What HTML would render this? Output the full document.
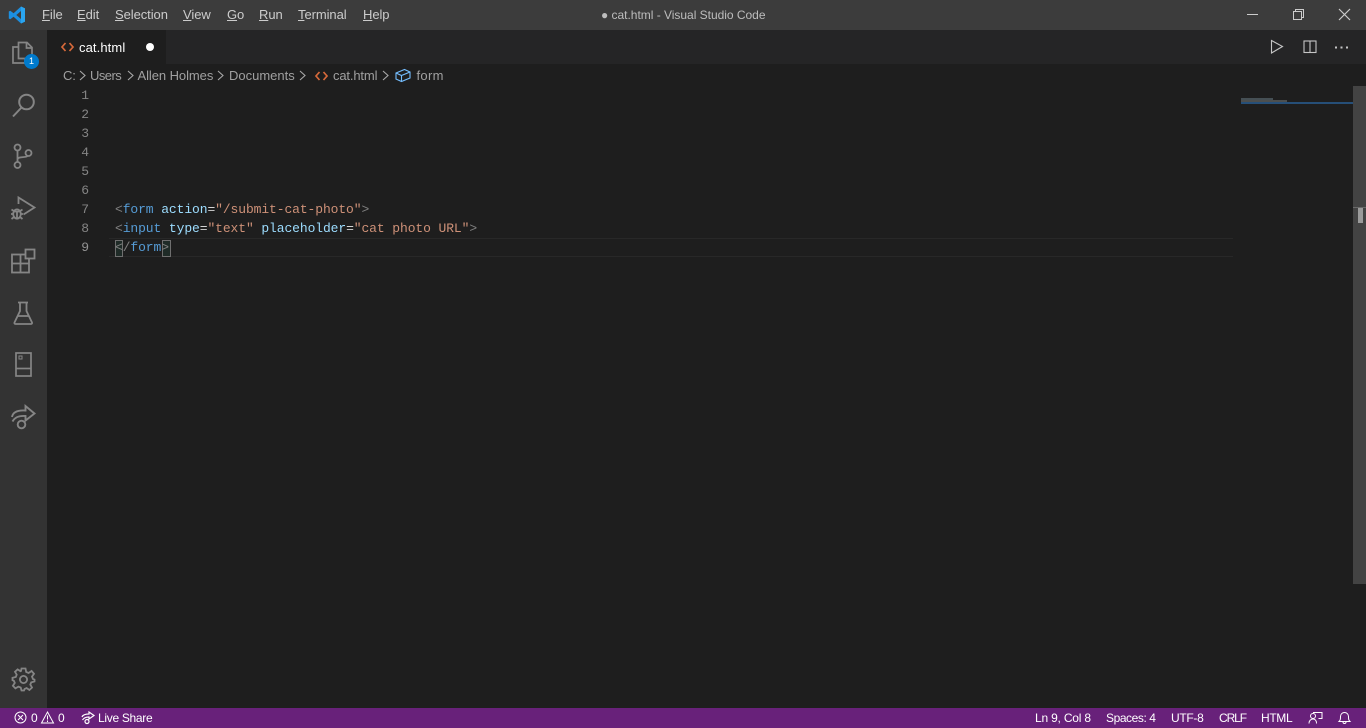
<!DOCTYPE html>
<html lang="en">
<head>
<meta charset="utf-8">
<title>cat.html - Visual Studio Code</title>
<style>
html,body{margin:0;padding:0;width:1366px;height:728px;overflow:hidden;background:#1e1e1e;font-family:"Liberation Sans",sans-serif;}
.a{position:absolute;white-space:pre;}
.m{font-size:13px;color:#cccccc;top:7px;line-height:16px;letter-spacing:-.07px}
.m u{text-underline-offset:1px}
.b{font-size:13px;color:#a0a0a0;top:67px;line-height:17px;letter-spacing:-.15px}
.n{font-family:"Liberation Mono",monospace;font-size:13px;line-height:19px;color:#858585;width:24px;left:65px;text-align:right;letter-spacing:-.1px}
.c{font-family:"Liberation Mono",monospace;font-size:13px;line-height:19px;left:115px;letter-spacing:-.1px;color:#d4d4d4}
.t{color:#808080}.g{color:#569cd6}.k{color:#9cdcfe}.s{color:#ce9178}.d{color:#d4d4d4}
.st{font-size:12px;color:#ffffff;top:711px;line-height:15px;letter-spacing:-.1px}
svg{position:absolute;overflow:visible}
</style>
</head>
<body>
<div class="a" style="left:0;top:0;width:1366px;height:30px;background:#3c3c3c"></div>
<div class="a" style="left:0;top:30px;width:47px;height:678px;background:#333333"></div>
<div class="a" style="left:47px;top:30px;width:1319px;height:34px;background:#252526"></div>
<div class="a" style="left:47px;top:30px;width:119px;height:34px;background:#1e1e1e"></div>
<div class="a" style="left:0;top:708px;width:1366px;height:20px;background:#68217a"></div>

<!-- logo -->
<svg style="left:8px;top:6px" width="18" height="18" viewBox="0 0 18 18"><path d="M13 0.5L17 2.4V15.6L13 17.5L5.6 10.8L2.3 13.3L0.8 12.5V5.5L2.3 4.7L5.6 7.2ZM13 5L8.3 9L13 13Z" fill="#1c8fe0"/><path d="M13 0.5L17 2.4V15.6L13 17.5V13V5Z" fill="#2aa5f0"/></svg>

<!-- menu -->
<div class="a m" style="left:42px"><u>F</u>ile</div>
<div class="a m" style="left:77px"><u>E</u>dit</div>
<div class="a m" style="left:115px"><u>S</u>election</div>
<div class="a m" style="left:183px"><u>V</u>iew</div>
<div class="a m" style="left:227px"><u>G</u>o</div>
<div class="a m" style="left:259px"><u>R</u>un</div>
<div class="a m" style="left:298px"><u>T</u>erminal</div>
<div class="a m" style="left:363px"><u>H</u>elp</div>
<div class="a" style="left:601px;top:7px;font-size:12px;line-height:16px;color:#bdbdbd;letter-spacing:-.02px">● cat.html - Visual Studio Code</div>

<!-- window controls -->
<svg style="left:1247px;top:14px" width="12" height="2"><rect x="0" y="0" width="11" height="1" fill="#cccccc"/></svg>
<svg style="left:1292px;top:8px" width="14" height="14" fill="none" stroke="#cccccc"><rect x="1.5" y="3.5" width="8" height="8"/><path d="M3.5 3.5V1.5H11.5V9.5H9.5"/></svg>
<svg style="left:1338px;top:8px" width="13" height="13" fill="none" stroke="#cccccc" stroke-width="1.2"><path d="M1 1L12 12M12 1L1 12"/></svg>

<!-- activity icons -->
<svg style="left:11px;top:40px" width="26" height="28" fill="none" stroke="#858585" stroke-width="1.7"><path d="M8 7H2V23H14V19"/><path d="M7.5 2.5H16L21 7.5V18.5H7.5Z"/><path d="M15.5 2.5V8H21"/></svg>
<div class="a" style="left:24px;top:54px;width:15px;height:15px;border-radius:50%;background:#007acc;color:#fff;font-size:9px;line-height:15px;text-align:center">1</div>
<svg style="left:11px;top:92px" width="26" height="26" fill="none" stroke="#858585" stroke-width="2"><circle cx="15.5" cy="10" r="7.3"/><path d="M10.5 15.5L2 24.5"/></svg>
<svg style="left:12px;top:144px" width="22" height="26" fill="none" stroke="#858585" stroke-width="1.8"><circle cx="5.5" cy="3.5" r="3"/><circle cx="5.5" cy="21" r="3"/><circle cx="16.5" cy="9" r="3"/><path d="M5.5 6.5V18M5.5 15.5C5.5 12 14 14 15.5 12"/></svg>
<svg style="left:10px;top:196px" width="28" height="26" fill="none" stroke="#858585" stroke-width="1.8"><path d="M8.5 8V1.5L24.5 11.5L13.5 18.5"/><ellipse cx="7" cy="18" rx="3.8" ry="4.6"/><path d="M1.5 13.5L4 15M12.5 13.5L10 15M1 18H3M11 18H13M1.5 23L4 21M12.5 23L10 21M3.5 15.5H10.5M7 15V22"/></svg>
<svg style="left:10px;top:248px" width="27" height="27" fill="none" stroke="#858585" stroke-width="1.8"><rect x="2" y="6.5" width="17" height="18"/><path d="M2 15.5H19M10.5 6.5V24.5"/><rect x="15.5" y="1.5" width="9" height="9" fill="#333333"/></svg>
<svg style="left:13px;top:301px" width="21" height="24" fill="none" stroke="#858585" stroke-width="1.8"><path d="M5 1.5H15M7 1.5V10L1.5 21.5C1.2 22 1.5 23 2.5 23H18C19 23 19.3 22 19 21.5L13.5 10V1.5"/><path d="M5 15H15.5"/></svg>
<svg style="left:15px;top:352px" width="18" height="26" fill="none" stroke="#858585" stroke-width="1.7"><rect x="1" y="1" width="15" height="23"/><path d="M1 16.5H16"/><rect x="4" y="4" width="3" height="3" stroke-width="1"/></svg>
<svg style="left:10px;top:404px" width="27" height="27" fill="none" stroke="#858585" stroke-width="1.9"><path d="M2 13C3 7.5 8 6 15.5 6.5V2L24.5 9.5L15.5 16.5V12C9 11.5 5 13 2.5 17.5"/><circle cx="11.5" cy="20.5" r="3.8"/></svg>
<svg style="left:11px;top:667px" width="25" height="25" viewBox="0 0 25 25" fill="none" stroke="#858585" stroke-width="1.8"><path d="M10.5 1.5H14.5L15.2 5L17.6 6L20.6 4L23 6.8L21 9.6L22 12L23.5 12.6V14.5L20.2 15.4L19.3 17.6L21 20.6L18.4 23L15.6 21L13.6 22L13 23.5H10.5L9.7 20.5L7.4 19.6L4.4 21.4L1.9 18.8L3.8 15.9L2.9 13.8L1.5 13.2V10.8L4.8 10L5.7 7.7L4 4.8L6.6 2.4L9.5 4.2L10 4Z"/><circle cx="12.5" cy="12.5" r="3.6"/></svg>

<!-- tab -->
<svg style="left:61px;top:42px" width="13" height="10" fill="none" stroke="#d6693a" stroke-width="1.7"><path d="M4.5 1L1 5L4.5 9M8.5 1L12 5L8.5 9"/></svg>
<div class="a" style="left:79px;top:39px;font-size:13px;line-height:17px;color:#ffffff;letter-spacing:.1px">cat.html</div>
<div class="a" style="left:146px;top:43px;width:8px;height:8px;border-radius:50%;background:#ffffff"></div>

<!-- editor actions -->
<svg style="left:1270px;top:39px" width="14" height="16" fill="none" stroke="#c5c5c5" stroke-width="1.1"><path d="M1.5 1.5L12.5 7.5L1.5 14Z"/></svg>
<svg style="left:1303px;top:40px" width="14" height="14" fill="none" stroke="#c5c5c5" stroke-width="1.1"><rect x="1" y="1" width="12" height="11.5"/><path d="M7 1V12.5"/></svg>
<svg style="left:1335px;top:46px" width="14" height="3" fill="#c5c5c5"><rect x="0" y="0.5" width="2" height="2"/><rect x="5.5" y="0.5" width="2" height="2"/><rect x="11" y="0.5" width="2" height="2"/></svg>

<!-- breadcrumbs -->
<div class="a b" style="left:63px">C:</div>
<div class="a b" style="left:90px;letter-spacing:-.55px">Users</div>
<div class="a b" style="left:137.5px;letter-spacing:-.07px">Allen Holmes</div>
<div class="a b" style="left:229px;letter-spacing:0">Documents</div>
<div class="a b" style="left:333px">cat.html</div>
<div class="a b" style="left:416.5px;letter-spacing:.3px">form</div>
<svg style="left:78px;top:70px" width="9" height="11" fill="none" stroke="#a8a8a8" stroke-width="1.1"><path d="M2 1L7 5.5L2 10"/></svg>
<svg style="left:126px;top:70px" width="9" height="11" fill="none" stroke="#a8a8a8" stroke-width="1.1"><path d="M2 1L7 5.5L2 10"/></svg>
<svg style="left:216px;top:70px" width="9" height="11" fill="none" stroke="#a8a8a8" stroke-width="1.1"><path d="M2 1L7 5.5L2 10"/></svg>
<svg style="left:298px;top:70px" width="9" height="11" fill="none" stroke="#a8a8a8" stroke-width="1.1"><path d="M2 1L7 5.5L2 10"/></svg>
<svg style="left:381px;top:70px" width="9" height="11" fill="none" stroke="#a8a8a8" stroke-width="1.1"><path d="M2 1L7 5.5L2 10"/></svg>
<svg style="left:315px;top:71px" width="13" height="10" fill="none" stroke="#d6693a" stroke-width="1.7"><path d="M4.5 1L1 5L4.5 9M8.5 1L12 5L8.5 9"/></svg>
<svg style="left:395px;top:68px" width="16" height="15" fill="none" stroke="#75beff" stroke-width="1.1"><path d="M1 5L9.5 1.5L15 4V10L6.5 13.5L1 11Z"/><path d="M1 5L6.5 7.5L15 4M6.5 7.5V13.5"/></svg>

<!-- line numbers -->
<div class="a n" style="top:86px">1</div>
<div class="a n" style="top:105px">2</div>
<div class="a n" style="top:124px">3</div>
<div class="a n" style="top:143px">4</div>
<div class="a n" style="top:162px">5</div>
<div class="a n" style="top:181px">6</div>
<div class="a n" style="top:200px">7</div>
<div class="a n" style="top:219px">8</div>
<div class="a n" style="top:238px;color:#929292">9</div>

<!-- current line + bracket match -->
<div class="a" style="left:109px;top:238px;width:1124px;height:17px;border-top:1px solid #282828;border-bottom:1px solid #282828"></div>
<div class="a" style="left:115px;top:240px;width:6px;height:15px;border:1px solid #6f6f6f;background:#1f2b27"></div>
<div class="a" style="left:162px;top:240px;width:7px;height:15px;border:1px solid #6f6f6f;background:#1f2b27"></div>

<!-- code -->
<div class="a c" style="top:200px"><span class="t">&lt;</span><span class="g">form</span> <span class="k">action</span><span class="d">=</span><span class="s">"/submit-cat-photo"</span><span class="t">&gt;</span></div>
<div class="a c" style="top:219px"><span class="t">&lt;</span><span class="g">input</span> <span class="k">type</span><span class="d">=</span><span class="s">"text"</span> <span class="k">placeholder</span><span class="d">=</span><span class="s">"cat photo URL"</span><span class="t">&gt;</span></div>
<div class="a c" style="top:238px"><span class="t">&lt;/</span><span class="g">form</span><span class="t">&gt;</span></div>

<!-- minimap -->
<div class="a" style="left:1241px;top:102px;width:112px;height:2px;background:#264f78"></div>
<div class="a" style="left:1241px;top:98px;width:32px;height:2px;background:#5f6f78;opacity:.6"></div>
<div class="a" style="left:1241px;top:100px;width:46px;height:2px;background:#6a6f70;opacity:.6"></div>

<!-- scrollbar -->
<div class="a" style="left:1353px;top:86px;width:13px;height:498px;background:#434343"></div>
<div class="a" style="left:1353px;top:207px;width:13px;height:1px;background:#6a6a6a"></div>
<div class="a" style="left:1358px;top:208px;width:5px;height:15px;background:#9b9b9b"></div>

<!-- status bar -->
<svg style="left:14px;top:711px" width="14" height="14" fill="none" stroke="#fff" stroke-width="1"><circle cx="6.5" cy="6.5" r="5.5"/><path d="M4 4L9 9M9 4L4 9"/></svg>
<div class="a st" style="left:31px">0</div>
<svg style="left:41px;top:711px" width="14" height="13" fill="none" stroke="#fff" stroke-width="1"><path d="M6.5 1L12.5 12H.5Z"/><path d="M6.5 4.5V8.5M6.5 9.5V11"/></svg>
<div class="a st" style="left:58px">0</div>
<svg style="left:81px;top:711px" width="14" height="14" fill="none" stroke="#fff" stroke-width="1.2"><path d="M1 6C2 3.5 4.5 3 8 3V1L13 4.5L8 8V6C5 6 3 6.5 1.5 9"/><circle cx="6" cy="10.5" r="2"/></svg>
<div class="a st" style="left:98px;letter-spacing:-.3px">Live Share</div>
<div class="a st" style="left:1035px;letter-spacing:-.2px">Ln 9, Col 8</div>
<div class="a st" style="left:1106px;letter-spacing:-.43px">Spaces: 4</div>
<div class="a st" style="left:1171px;letter-spacing:-.3px">UTF-8</div>
<div class="a st" style="left:1219px;letter-spacing:-1.1px">CRLF</div>
<div class="a st" style="left:1261px;letter-spacing:-.35px">HTML</div>
<svg style="left:1308px;top:711px" width="15" height="14" fill="none" stroke="#fff" stroke-width="1"><circle cx="5" cy="5" r="2.5"/><path d="M1 12.5C1 9.5 3 8 5 8C7 8 8.5 9.5 8.5 12.5M5 1.5H14V7.5H10.5"/></svg>
<svg style="left:1338px;top:711px" width="13" height="14" fill="none" stroke="#fff" stroke-width="1"><path d="M1 10.5H12C10.5 9 10.5 8 10.5 5.5C10.5 3 8.5 1.5 6.5 1.5C4.5 1.5 2.5 3 2.5 5.5C2.5 8 2.5 9 1 10.5Z"/><path d="M5 11C5 13 8 13 8 11"/></svg>
</body>
</html>
